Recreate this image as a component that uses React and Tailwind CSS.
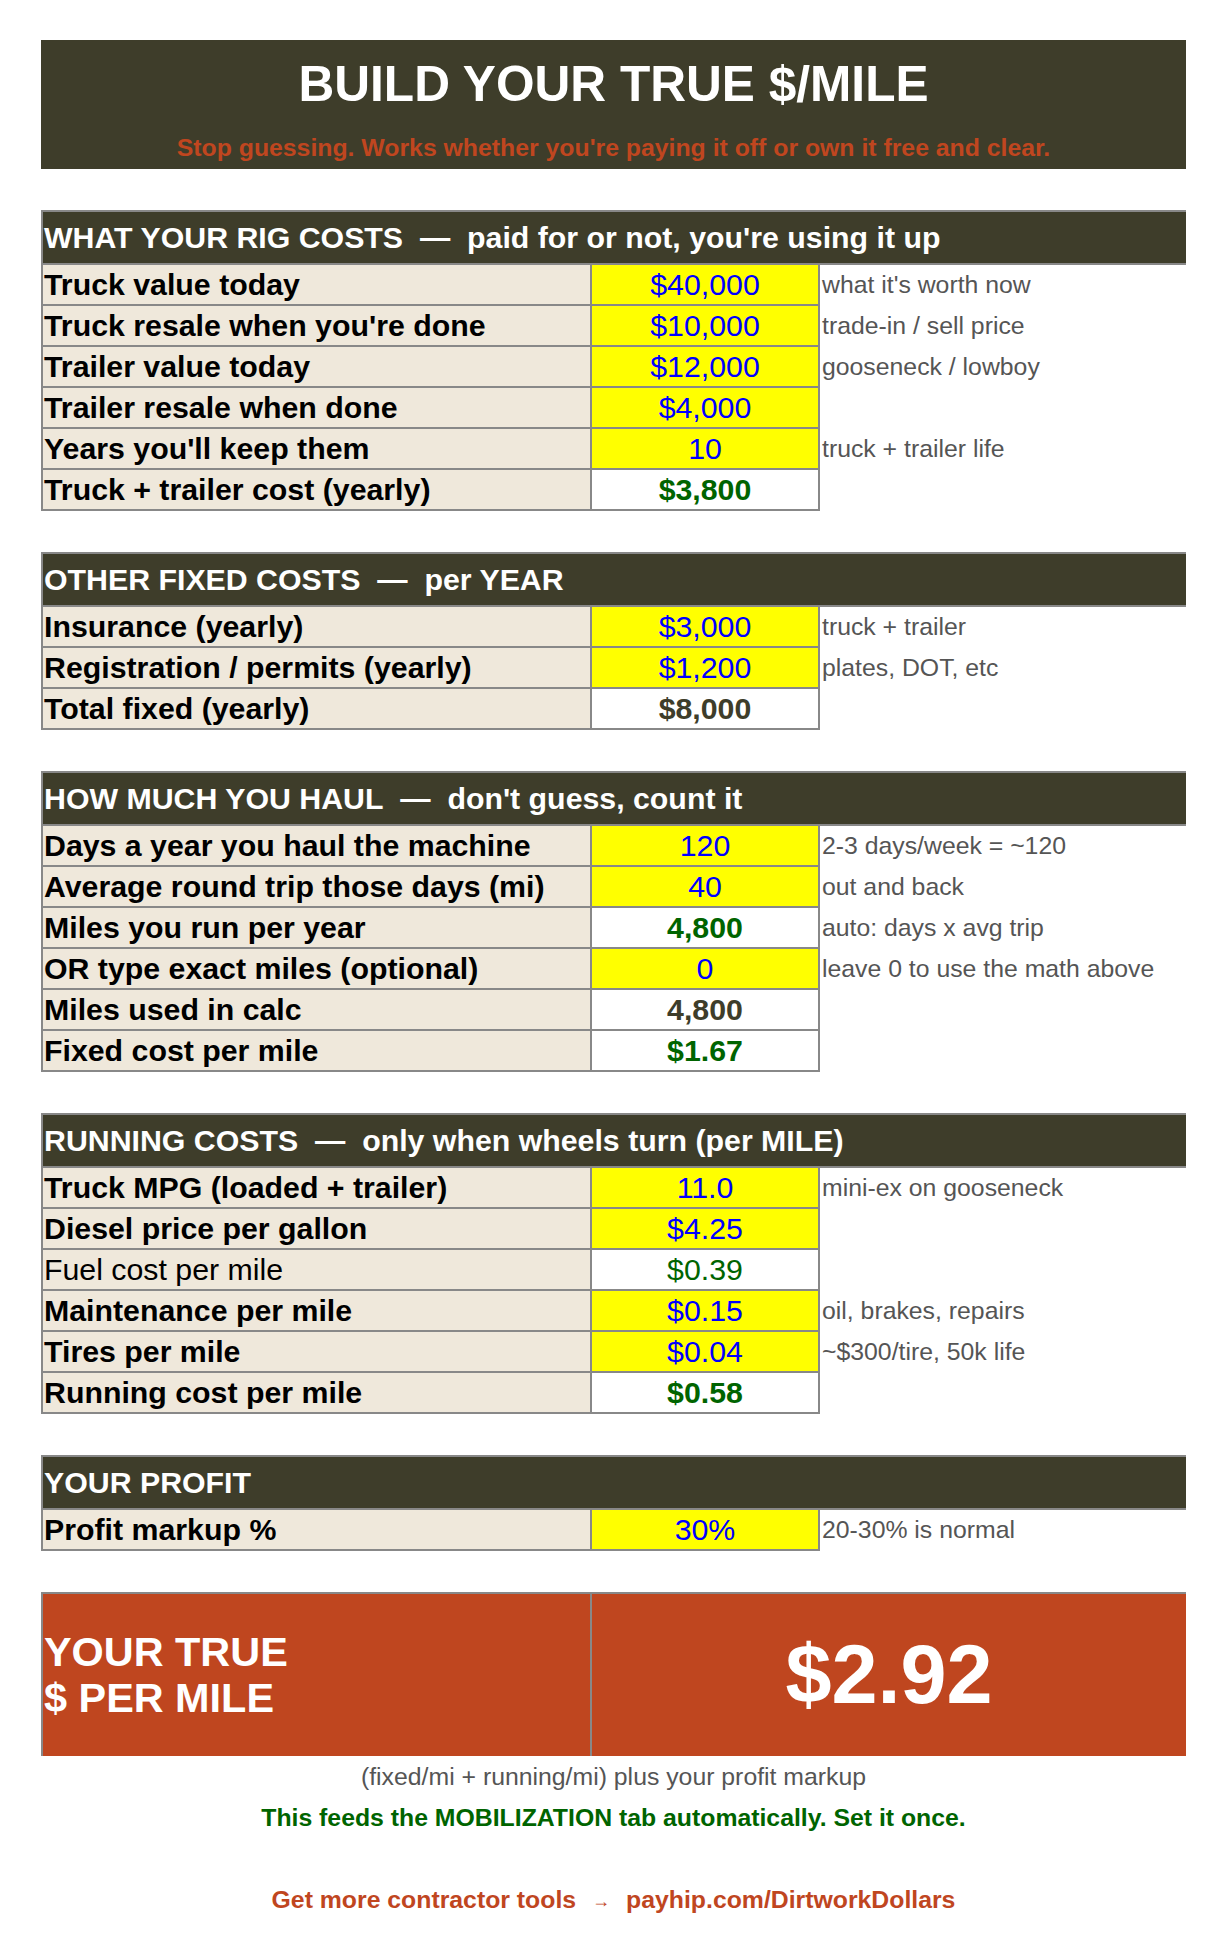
import React from "react";

const FONT = { fontFamily: '"Liberation Sans", Arial, Helvetica, sans-serif' };

const sections = [
  {
    title: "WHAT YOUR RIG COSTS\u00a0\u00a0—\u00a0\u00a0paid for or not, you're using it up",
    rows: [
      { label: "Truck value today", value: "$40,000", kind: "input", note: "what it's worth now" },
      { label: "Truck resale when you're done", value: "$10,000", kind: "input", note: "trade-in / sell price" },
      { label: "Trailer value today", value: "$12,000", kind: "input", note: "gooseneck / lowboy" },
      { label: "Trailer resale when done", value: "$4,000", kind: "input", note: "" },
      { label: "Years you'll keep them", value: "10", kind: "input", note: "truck + trailer life" },
      { label: "Truck + trailer cost (yearly)", value: "$3,800", kind: "green", note: "" },
    ],
  },
  {
    title: "OTHER FIXED COSTS\u00a0\u00a0—\u00a0\u00a0per YEAR",
    rows: [
      { label: "Insurance (yearly)", value: "$3,000", kind: "input", note: "truck + trailer" },
      { label: "Registration / permits (yearly)", value: "$1,200", kind: "input", note: "plates, DOT, etc" },
      { label: "Total fixed (yearly)", value: "$8,000", kind: "dark", note: "" },
    ],
  },
  {
    title: "HOW MUCH YOU HAUL\u00a0\u00a0—\u00a0\u00a0don't guess, count it",
    rows: [
      { label: "Days a year you haul the machine", value: "120", kind: "input", note: "2-3 days/week = ~120" },
      { label: "Average round trip those days (mi)", value: "40", kind: "input", note: "out and back" },
      { label: "Miles you run per year", value: "4,800", kind: "green", note: "auto: days x avg trip" },
      { label: "OR type exact miles (optional)", value: "0", kind: "input", note: "leave 0 to use the math above" },
      { label: "Miles used in calc", value: "4,800", kind: "dark", note: "" },
      { label: "Fixed cost per mile", value: "$1.67", kind: "green", note: "" },
    ],
  },
  {
    title: "RUNNING COSTS\u00a0\u00a0—\u00a0\u00a0only when wheels turn (per MILE)",
    rows: [
      { label: "Truck MPG (loaded + trailer)", value: "11.0", kind: "input", note: "mini-ex on gooseneck" },
      { label: "Diesel price per gallon", value: "$4.25", kind: "input", note: "" },
      { label: "Fuel cost per mile", value: "$0.39", kind: "greenRegular", note: "", regularLabel: true },
      { label: "Maintenance per mile", value: "$0.15", kind: "input", note: "oil, brakes, repairs" },
      { label: "Tires per mile", value: "$0.04", kind: "input", note: "~$300/tire, 50k life" },
      { label: "Running cost per mile", value: "$0.58", kind: "green", note: "" },
    ],
  },
  {
    title: "YOUR PROFIT",
    rows: [{ label: "Profit markup %", value: "30%", kind: "input", note: "20-30% is normal" }],
  },
];

const valueClass = {
  input:
    "w-[228px] shrink-0 bg-[#ffff00] border-r-2 border-b-2 border-solid border-[#888888] flex items-center justify-center text-[30.3px] leading-[34px] text-[#0000ff]",
  green:
    "w-[228px] shrink-0 bg-white border-r-2 border-b-2 border-solid border-[#888888] flex items-center justify-center text-[30.3px] leading-[34px] font-bold text-[#006400]",
  greenRegular:
    "w-[228px] shrink-0 bg-white border-r-2 border-b-2 border-solid border-[#888888] flex items-center justify-center text-[30.3px] leading-[34px] text-[#006400]",
  dark:
    "w-[228px] shrink-0 bg-white border-r-2 border-b-2 border-solid border-[#888888] flex items-center justify-center text-[30.3px] leading-[34px] font-bold text-[#3e3d2a]",
};

function Row({ row }) {
  return (
    <div className="flex h-[41px] overflow-hidden">
      <div
        className={
          row.regularLabel
            ? "w-[551px] shrink-0 bg-[#efe8db] border-l-2 border-r-2 border-b-2 border-solid border-[#888888] flex items-center pl-[1px] text-[30.3px] leading-[34px] text-black whitespace-nowrap"
            : "w-[551px] shrink-0 bg-[#efe8db] border-l-2 border-r-2 border-b-2 border-solid border-[#888888] flex items-center pl-[1px] text-[30.3px] leading-[34px] font-bold text-black whitespace-nowrap"
        }
      >
        {row.label}
      </div>
      <div className={valueClass[row.kind]}>{row.value}</div>
      <div className="flex-1 flex items-center pl-[2px] pb-[1px] text-[24.8px] leading-[28px] text-[#555555] whitespace-nowrap">
        {row.note}
      </div>
    </div>
  );
}

function Section({ section }) {
  return (
    <div className="mt-[41px]">
      <div className="h-[55px] bg-[#3e3d2a] border-t-2 border-b-2 border-l-2 border-solid border-[#888888] flex items-center pl-[1px] text-[30.3px] leading-[34px] font-bold text-white whitespace-nowrap">
        {section.title}
      </div>
      {section.rows.map((r, i) => (
        <Row key={i} row={r} />
      ))}
    </div>
  );
}

export default function App() {
  return (
    <div className="w-[1226px] min-h-[1956px] bg-white" style={FONT}>
      <div className="ml-[41px] w-[1145px] pt-[40px]">
        <div className="h-[129px] bg-[#3e3d2a] flex flex-col items-center pt-[16px]">
          <div className="text-[49.6px] leading-[56px] font-bold text-white whitespace-nowrap">BUILD YOUR TRUE $/MILE</div>
          <div className="mt-[22px] text-[24.8px] leading-[28px] font-bold text-[#c0461f] whitespace-nowrap">
            Stop guessing. Works whether you're paying it off or own it free and clear.
          </div>
        </div>

        {sections.map((s, i) => (
          <Section key={i} section={s} />
        ))}

        <div className="mt-[41px] h-[164px] flex border-t-2 border-solid border-[#888888] bg-[#bf461f]">
          <div className="w-[551px] shrink-0 border-l-2 border-r-2 border-solid border-[#888888] flex items-center pl-[1px]">
            <div className="text-[41.4px] leading-[46px] font-bold text-white">
              <div>YOUR TRUE</div>
              <div>$ PER MILE</div>
            </div>
          </div>
          <div className="flex-1 flex items-center justify-center text-[82.8px] leading-[92px] font-bold text-white">
            $2.92
          </div>
        </div>

        <div className="mt-[7px] text-center text-[24.8px] leading-[28px] text-[#555555]">
          (fixed/mi + running/mi) plus your profit markup
        </div>
        <div className="mt-[13px] text-center text-[24.8px] leading-[28px] font-bold text-[#006400]">
          This feeds the MOBILIZATION tab automatically. Set it once.
        </div>
        <div className="mt-[54px] text-center text-[24.8px] leading-[28px] font-bold text-[#c0461f] whitespace-nowrap">
          Get more contractor tools
          <span className="font-normal text-[18px] mx-[16px] align-[1px]">→</span>
          payhip.com/DirtworkDollars
        </div>
      </div>
    </div>
  );
}
